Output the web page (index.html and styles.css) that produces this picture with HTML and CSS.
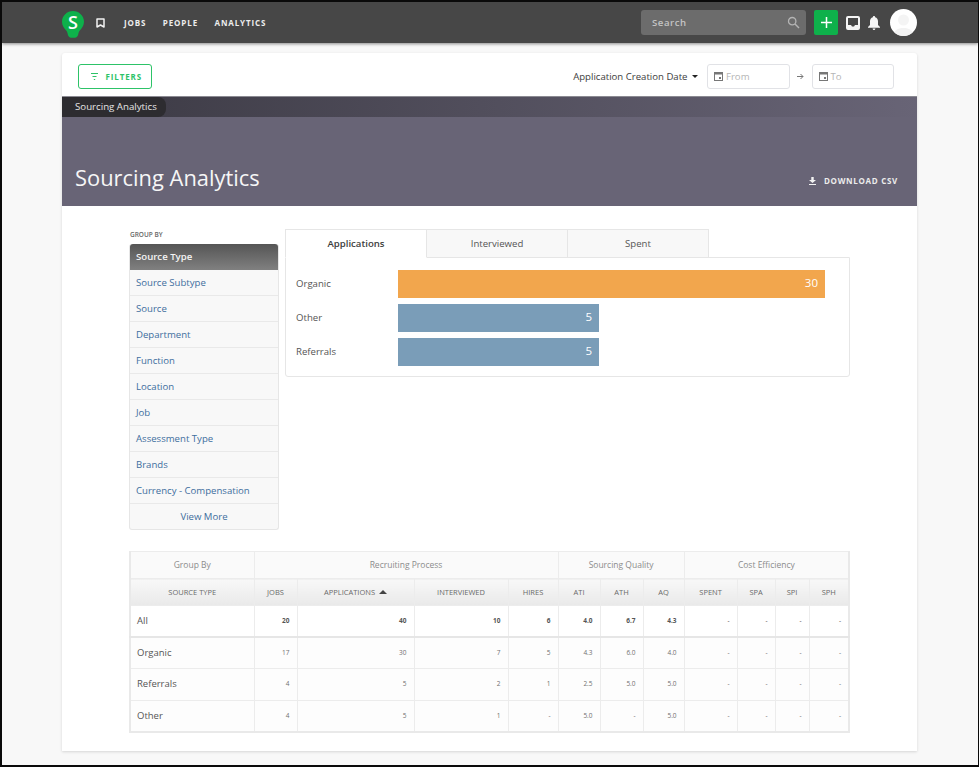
FILE: index.html
```html
<!DOCTYPE html>
<html lang="en">
<head>
<meta charset="utf-8">
<title>Sourcing Analytics</title>
<link rel="stylesheet" href="styles.css">
</head>
<body>
<div class="frame">
  <header class="topbar">
    <div class="logo"><svg width="22" height="27" viewBox="0 0 22 27"><path d="M11 0C5 0 0 4.800 0 10.800c0 4 2.200 6.400 4.200 8.600.9 1 1.300 2.400 1.600 4 .3 2 1.700 3.400 5.200 3.400s4.900-1.400 5.200-3.400c.3-1.600.7-3 1.600-4 2-2.200 4.200-4.600 4.200-8.600C22 4.800 17 0 11 0z" fill="#0eb14b"/></svg><span class="logo-s">S</span></div>
    <svg class="bookmark" width="9" height="10" viewBox="0 0 9 10"><path d="M1 1h7v8L4.500 7 1 9z" fill="none" stroke="#f2f2f2" stroke-width="1.500" stroke-linejoin="round"/></svg>
    <nav class="nav"><a>JOBS</a><a>PEOPLE</a><a>ANALYTICS</a></nav>
    <div class="search"><span>Search</span>
      <svg width="13" height="13" viewBox="0 0 13 13"><circle cx="5.200" cy="5.200" r="3.700" fill="none" stroke="#b4b4b4" stroke-width="1.300"/><path d="M8 8l4 4" stroke="#b4b4b4" stroke-width="1.500"/></svg>
    </div>
    <button class="add"><svg width="11" height="11" viewBox="0 0 11 11"><path d="M5.500 0v11M0 5.500h11" stroke="#fff" stroke-width="1.500"/></svg></button>
    <svg class="inbox" width="14" height="14" viewBox="0 0 14 14"><path d="M2 0h10a2 2 0 0 1 2 2v10a2 2 0 0 1-2 2H2a2 2 0 0 1-2-2V2a2 2 0 0 1 2-2zm0 2v7h3l1 1.500h2L9 9h3V2z" fill="#f5f5f5" fill-rule="evenodd"/></svg>
    <svg class="bell" width="12" height="14" viewBox="0 0 12 14"><path d="M6 0c.7 0 1.100.5 1.100 1.200C9 1.700 10 3.300 10 5.300V9l2 2v.7H0V11l2-2V5.300c0-2 1-3.600 2.900-4.100C4.900.5 5.300 0 6 0zM4.600 12.500h2.800C7.400 13.400 6.800 14 6 14s-1.400-.6-1.400-1.500z" fill="#f5f5f5"/></svg>
    <div class="avatar"><svg width="27" height="27" viewBox="0 0 27 27"><circle cx="13.500" cy="11" r="5.500" fill="#f4f4f4"/><path d="M3 27c1-6 5-8 10.500-8S23 21 24 27z" fill="#f2f2f2"/></svg></div>
  </header>

  <main class="card">
    <div class="filterbar">
      <button class="filters"><svg width="9" height="7" viewBox="0 0 9 7"><path d="M1 .5h7M2.500 3.500h4M3.800 6.500h1.400" stroke="#2dc368" stroke-width="1"/></svg><span>FILTERS</span></button>
      <div class="dates">
        <span class="datetype">Application Creation Date <i class="caret"></i></span>
        <div class="dateinput"><svg width="9" height="9" viewBox="0 0 9 9"><path d="M0 0h9v9H0z M1 2.500V8h7V2.500z M5 5h2v2H5z" fill="#777" fill-rule="evenodd"/></svg><span>From</span></div>
        <svg class="arrow" width="7" height="7" viewBox="0 0 7 7"><path d="M0 3.500h6M3.500 1l2.500 2.500L3.500 6" fill="none" stroke="#777" stroke-width="1"/></svg>
        <div class="dateinput"><svg width="9" height="9" viewBox="0 0 9 9"><path d="M0 0h9v9H0z M1 2.500V8h7V2.500z M5 5h2v2H5z" fill="#777" fill-rule="evenodd"/></svg><span>To</span></div>
      </div>
    </div>

    <section class="banner">
      <div class="strip"><span class="crumb">Sourcing Analytics</span></div>
      <div class="banner-main">
        <h1>Sourcing Analytics</h1>
        <a class="download"><svg width="7" height="8" viewBox="0 0 7 8"><path d="M2.300 0h2.400v3H7L3.500 6 0 3h2.300zM0 7h7v1H0z" fill="#f2f2f2"/></svg>DOWNLOAD CSV</a>
      </div>
    </section>

    <div class="content">
      <div class="upper">
        <aside class="groupby">
          <div class="gb-label">GROUP BY</div>
          <ul class="gb-list">
            <li class="active">Source Type</li>
            <li>Source Subtype</li>
            <li>Source</li>
            <li>Department</li>
            <li>Function</li>
            <li>Location</li>
            <li>Job</li>
            <li>Assessment Type</li>
            <li>Brands</li>
            <li>Currency - Compensation</li>
            <li class="more">View More</li>
          </ul>
        </aside>
        <section class="chart">
          <div class="tabs">
            <div class="tab on">Applications</div>
            <div class="tab">Interviewed</div>
            <div class="tab">Spent</div>
          </div>
          <div class="panel">
            <div class="row"><span class="lbl">Organic</span><div class="bar orange" style="width:427px">30</div></div>
            <div class="row"><span class="lbl">Other</span><div class="bar blue" style="width:201px">5</div></div>
            <div class="row"><span class="lbl">Referrals</span><div class="bar blue" style="width:201px">5</div></div>
          </div>
        </section>
      </div>

      <table class="data">
        <colgroup>
          <col style="width:124px"><col style="width:43px"><col style="width:117px"><col style="width:94px"><col style="width:50px"><col style="width:42px"><col style="width:43px"><col style="width:41px"><col style="width:53px"><col style="width:38px"><col style="width:34px"><col style="width:40px">
        </colgroup>
        <thead>
          <tr class="groups"><th>Group By</th><th colspan="4">Recruiting Process</th><th colspan="3">Sourcing Quality</th><th colspan="4">Cost Efficiency</th></tr>
          <tr class="heads"><th>SOURCE TYPE</th><th>JOBS</th><th>APPLICATIONS <i class="sort"></i></th><th>INTERVIEWED</th><th>HIRES</th><th>ATI</th><th>ATH</th><th>AQ</th><th>SPENT</th><th>SPA</th><th>SPI</th><th>SPH</th></tr>
        </thead>
        <tbody>
          <tr class="total"><td>All</td><td>20</td><td>40</td><td>10</td><td>6</td><td>4.0</td><td>6.7</td><td>4.3</td><td>-</td><td>-</td><td>-</td><td>-</td></tr>
          <tr><td>Organic</td><td>17</td><td>30</td><td>7</td><td>5</td><td>4.3</td><td>6.0</td><td>4.0</td><td>-</td><td>-</td><td>-</td><td>-</td></tr>
          <tr><td>Referrals</td><td>4</td><td>5</td><td>2</td><td>1</td><td>2.5</td><td>5.0</td><td>5.0</td><td>-</td><td>-</td><td>-</td><td>-</td></tr>
          <tr><td>Other</td><td>4</td><td>5</td><td>1</td><td>-</td><td>5.0</td><td>-</td><td>5.0</td><td>-</td><td>-</td><td>-</td><td>-</td></tr>
        </tbody>
      </table>
    </div>
  </main>
</div>
</body>
</html>
```

FILE: styles.css
```css
* { box-sizing: border-box; }
html, body { margin: 0; padding: 0; height: 100%; overflow: hidden; }
body { font-family: "Open Sans", "Liberation Sans", sans-serif; background: #fff; }
.frame {
  width: 979px; height: 767px;
  border: 2px solid #0a0a0a; border-right-width: 1px;
  background: #f8f8f8;
  overflow: hidden;
}
.topbar {
  height: 41px; background: #474747;
  display: flex; align-items: center;
  padding: 0 61px 0 60px;
  box-shadow: 0 1px 3px rgba(0,0,0,.45);
  position: relative;
}
.logo { margin-top: 3px; flex: none; display: grid; width: 22px; height: 27px; }
.logo svg, .logo-s { grid-area: 1 / 1; }
.logo svg { display: block; }
.logo-s { height: 23px; line-height: 23px; text-align: center; font-size: 18px; font-weight: 600; color: #fff; }
.bookmark { margin-left: 12px; flex: none; }
.nav { display: flex; gap: 16.500px; margin-left: 19px; }
.nav a { font-size: 8px; font-weight: 700; letter-spacing: .88px; color: #ededed; }
.search {
  margin-left: auto; width: 165px; height: 25px;
  background: #6c6c6c; border-radius: 3px;
  display: flex; align-items: center; justify-content: space-between;
  padding: 0 6px 0 11px;
  color: #c4c4c4; font-size: 9.600px; font-weight: 600; letter-spacing: .55px;
}
.add {
  margin-left: 8px; width: 24px; height: 25px; border: 0; padding: 0;
  background: #0eb14b; border-radius: 2px;
  display: flex; align-items: center; justify-content: center;
}
.inbox { margin-left: 8px; flex: none; }
.bell { margin-left: 8px; flex: none; }
.avatar {
  margin-left: 10px; width: 27px; height: 27px; border-radius: 50%;
  background: #fff; overflow: hidden; flex: none;
}
.avatar svg { display: block; }
.card {
  width: 855px; height: 698px;
  margin: 10px 0 0 60px;
  background: #fff;
  box-shadow: 0 1px 3px rgba(0,0,0,.14);
  border-radius: 3px 3px 0 0;
}
.filterbar {
  height: 43px; display: flex; align-items: center; justify-content: space-between;
  padding: 3px 23px 0 16px;
}
.filters {
  width: 73.500px; height: 25px; background: #fff;
  border: 1px solid #2dc368; border-radius: 3px;
  display: flex; align-items: center; justify-content: center; gap: 7px; padding: 0 0 0 2px;
  font-family: inherit; font-size: 8px; font-weight: 700; letter-spacing: .85px; color: #2dc368;
}
.dates { display: flex; align-items: center; }
.datetype { font-size: 9.600px; color: #3d3d3d; display: flex; align-items: center; gap: 2px; white-space: pre; }
.caret { display: inline-block; border: 3.500px solid transparent; border-top-color: #222; border-bottom-width: 0; }
.dateinput {
  width: 82.500px; height: 25px; border: 1px solid #e1e2e6; border-radius: 3px;
  display: flex; align-items: center; gap: 3px; padding-left: 6px;
  font-size: 9.600px; color: #b5b5b5; background: #fff;
}
.datetype + .dateinput { margin-left: 9px; }
.arrow { margin: 0 8px 0 7px; }
.banner { height: 110px; background: #686476; color: #fff; }
.strip {
  height: 21px;
  background: linear-gradient(90deg, #3b3943 0%, #686476 100%);
  border-top: 1px solid #8b8a92;
}
.crumb {
  display: block; width: 104px; height: 20px; line-height: 19px;
  padding-left: 13px;
  background: #2d2c30; border-radius: 0 8px 8px 0;
  font-size: 9.700px; color: #e6e6e6;
  white-space: nowrap;
}
.banner-main {
  height: 89px; display: flex; align-items: flex-end; justify-content: space-between;
  padding: 0 19px 12px 13px;
}
h1 { margin: 0; font-size: 21.900px; font-weight: 400; line-height: 32px; color: #f6f6f6; }
.download {
  display: flex; align-items: center; gap: 8px;
  font-size: 8px; font-weight: 700; letter-spacing: .7px; color: #ececec;
  margin-bottom: 8px;
}
.content { padding: 23px 67px 0; }
.upper { display: flex; gap: 6px; height: 322px; }
.groupby { width: 150px; }
.gb-label { font-size: 6.500px; font-weight: 600; color: #666; height: 15px; line-height: 12px; padding-left: 1px; }
.gb-list {
  list-style: none; margin: 0; padding: 0;
  border: 1px solid #e6e6e6; border-top: 0; border-radius: 3px;
  background: #f8f8f8;
}
.gb-list li {
  height: 26px; line-height: 26px; padding-left: 6px;
  font-size: 9.600px; color: #3e6e9e;
  border-bottom: 1px solid #e9e9e9;
  white-space: nowrap;
}
.gb-list .active {
  color: #f4f4f4; font-weight: 600; border-radius: 3px 3px 0 0; border-bottom: 0;
  background: linear-gradient(180deg, #555 0%, #808080 100%);
}
.gb-list .more { text-align: center; border-bottom: 0; height: 25px; padding-left: 0; }
.chart { width: 565px; }
.tabs { display: flex; width: 424px; height: 29px; position: relative; z-index: 1; }
.tab {
  width: 141px; height: 29px; line-height: 28px; text-align: center;
  font-size: 9.600px; color: #555;
  background: #f8f8f8;
  border: 1px solid #e6e6e6; border-left: 0;
}
.tab.on {
  background: #fff; color: #3d3d3d; font-weight: 600; width: 142px;
  border-left: 1px solid #e6e6e6; border-bottom-color: #fff;
}
.panel {
  margin-top: -1px; height: 120px; border: 1px solid #e6e6e6; border-radius: 0 0 3px 3px;
  padding: 12px 0 0 10px;
  display: flex; flex-direction: column; gap: 6.500px;
}
.row { display: flex; align-items: center; height: 27.500px; }
.lbl { width: 102px; font-size: 9.600px; color: #555; flex: none; }
.bar {
  height: 100%; text-align: right; padding-right: 7px;
  font-size: 11.500px; line-height: 26px; color: #fff;
}
.orange { background: #f2a64d; }
.blue { background: #7a9db8; }
.data {
  width: 721px; table-layout: fixed; border-collapse: collapse;
  border: 2px solid #e9e9e9; border-top-width: 1px;
}
.data th, .data td { border: 1px solid #ececec; padding: 0; font-weight: 400; }
.groups th { height: 27px; background: #fafafa; color: #8c8c8c; font-size: 8.500px; line-height: 10px; padding-bottom: 1px; }
.heads th {
  height: 27px; color: #6a6a6a; font-size: 7.500px;
  background: linear-gradient(180deg, #f8f8f8 0%, #e9e9e9 100%);
  white-space: nowrap;
}
.sort { display: inline-block; border: 4px solid transparent; border-bottom-color: #444; border-top-width: 0; margin-left: 2px; vertical-align: 1px; }
.data tbody tr { height: 31.500px; background: #fdfdfd; }
.data td { text-align: right; padding-right: 7px; font-size: 6.500px; color: #707070; padding-bottom: 1px; }
.data td:first-child { text-align: left; padding-left: 6px; font-size: 9.500px; color: #555; }
.total td { font-weight: 700; color: #555; background: #fff; border-bottom: 2px solid #e6e6e6; }
.total td:first-child, .total td:nth-child(n+9) { font-weight: 400; }
```
